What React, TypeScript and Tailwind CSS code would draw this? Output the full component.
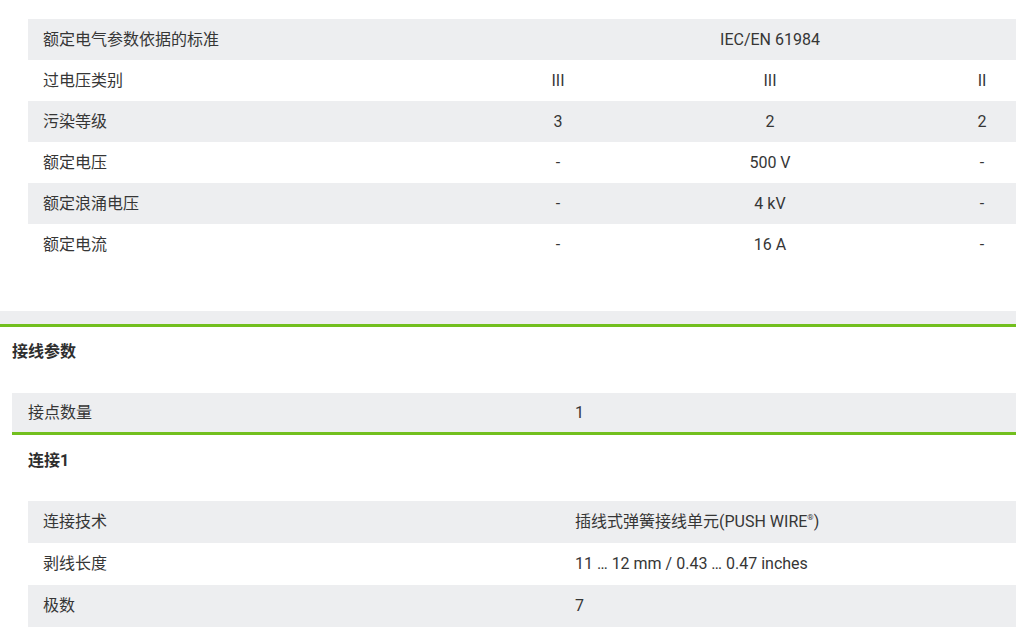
import React from "react";

const topRows: { label: string; vals: string[] | string }[] = [
  { label: "额定电气参数依据的标准", vals: "IEC/EN 61984" },
  { label: "过电压类别", vals: ["III", "III", "II"] },
  { label: "污染等级", vals: ["3", "2", "2"] },
  { label: "额定电压", vals: ["-", "500 V", "-"] },
  { label: "额定浪涌电压", vals: ["-", "4 kV", "-"] },
  { label: "额定电流", vals: ["-", "16 A", "-"] },
];

export default function App() {
  return (
    <div
      className="w-[1016px] h-[644px] overflow-hidden bg-white text-[#363636] text-[16px]"
      style={{ fontFamily: 'Roboto, "Noto Sans CJK SC", sans-serif' }}
    >
      <div className="pt-[19px] pl-[28px]">
        <div className="w-[1060px]">
          {topRows.map((r, i) => (
            <div
              key={i}
              className={`grid grid-cols-[424px_212px_212px_212px] h-[41px] items-center ${
                i % 2 === 0 ? "bg-[#edeef0]" : "bg-white"
              }`}
            >
              <div className="pl-[15px] leading-none">{r.label}</div>
              {typeof r.vals === "string" ? (
                <div className="col-span-3 text-center leading-none">{r.vals}</div>
              ) : (
                r.vals.map((v, j) => (
                  <div key={j} className="text-center leading-none">
                    {v}
                  </div>
                ))
              )}
            </div>
          ))}
        </div>
      </div>
      <div className="mt-[46px] h-[13px] bg-[#edeef0]" />
      <div className="h-[3px] bg-[#72bf1e]" />
      <div className="h-[66px] pl-[12px] pt-[14px] font-bold leading-[22px] text-[#2e2e2e]">接线参数</div>
      <div className="ml-[12px]">
        <div className="h-[39px] bg-[#edeef0] flex items-center">
          <div className="w-[563px] pl-[16px] leading-none">接点数量</div>
          <div className="leading-none">1</div>
        </div>
        <div className="h-[3px] bg-[#72bf1e]" />
      </div>
      <div className="h-[66px] pl-[28px] pt-[15px] font-bold leading-[22px] text-[#2e2e2e]">连接1</div>
      <div className="pl-[28px]">
        <div className="h-[42px] bg-[#edeef0] flex items-center">
          <div className="w-[547px] pl-[15px] leading-none">连接技术</div>
          <div className="leading-none">
            插线式弹簧接线单元(PUSH WIRE<sup className="text-[8px] relative -top-[7px]">®</sup>)
          </div>
        </div>
        <div className="h-[42px] bg-white flex items-center">
          <div className="w-[547px] pl-[15px] leading-none">剥线长度</div>
          <div className="leading-none">11 … 12 mm / 0.43 … 0.47 inches</div>
        </div>
        <div className="h-[42px] bg-[#edeef0] flex items-center">
          <div className="w-[547px] pl-[15px] leading-none">极数</div>
          <div className="leading-none">7</div>
        </div>
      </div>
    </div>
  );
}
